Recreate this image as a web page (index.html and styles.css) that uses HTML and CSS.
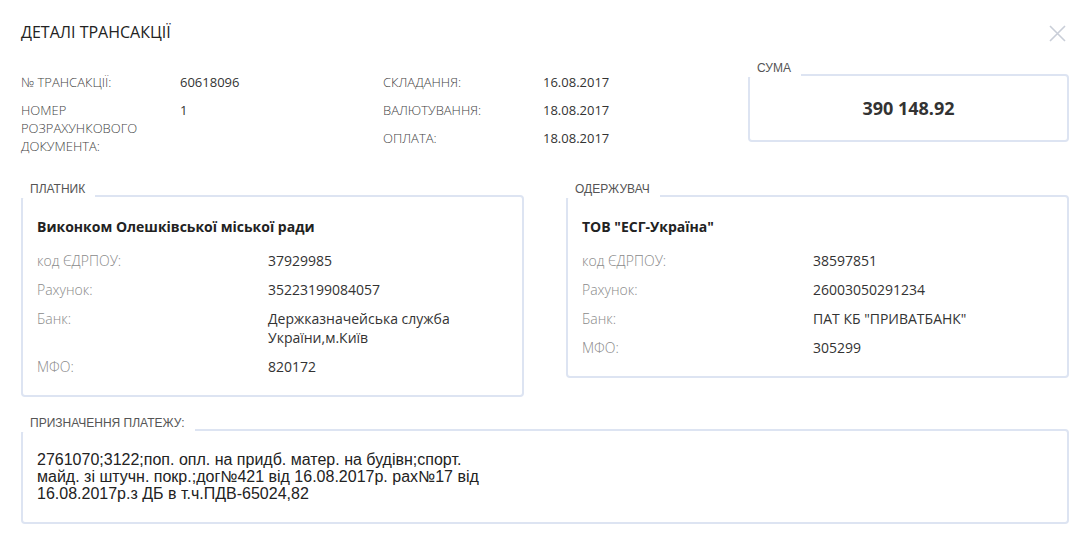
FILE: index.html
```html
<!DOCTYPE html>
<html lang="uk">

<head>
    <meta charset="UTF-8">
    <meta name="viewport" content="width=device-width, initial-scale=1.0">
    <title>Деталі трансакції</title>
    <link rel="stylesheet" href="styles.css">
</head>

<body>
    <div class="modal">
        <div class="modal-head">
            <h1 class="modal-title">ДЕТАЛІ ТРАНСАКЦІЇ</h1>
            <button class="close" type="button" aria-label="Закрити">
                <svg width="17" height="17" viewBox="0 0 17 17">
                    <path d="M1 1 L16 16 M16 1 L1 16" stroke="#c9ced8" stroke-width="1.6" fill="none" />
                </svg>
            </button>
        </div>

        <div class="summary">
            <dl class="info info-main">
                <dt>№ ТРАНСАКЦІЇ:</dt>
                <dd>60618096</dd>
                <dt>НОМЕР РОЗРАХУНКОВОГО ДОКУМЕНТА:</dt>
                <dd>1</dd>
            </dl>
            <dl class="info info-dates">
                <dt>СКЛАДАННЯ:</dt>
                <dd>16.08.2017</dd>
                <dt>ВАЛЮТУВАННЯ:</dt>
                <dd>18.08.2017</dd>
                <dt>ОПЛАТА:</dt>
                <dd>18.08.2017</dd>
            </dl>
            <div class="box sum-box">
                <span class="box-label">СУМА</span>
                <div class="sum">390 148.92</div>
            </div>
        </div>

        <div class="parties">
            <div class="box party">
                <span class="box-label">ПЛАТНИК</span>
                <div class="party-name">Виконком Олешківської міської ради</div>
                <dl class="party-rows">
                    <dt>код ЄДРПОУ:</dt>
                    <dd>37929985</dd>
                    <dt>Рахунок:</dt>
                    <dd>35223199084057</dd>
                    <dt>Банк:</dt>
                    <dd>Держказначейська служба України,м.Київ</dd>
                    <dt>МФО:</dt>
                    <dd>820172</dd>
                </dl>
            </div>
            <div class="box party">
                <span class="box-label">ОДЕРЖУВАЧ</span>
                <div class="party-name">ТОВ "ЕСГ-Україна"</div>
                <dl class="party-rows">
                    <dt>код ЄДРПОУ:</dt>
                    <dd>38597851</dd>
                    <dt>Рахунок:</dt>
                    <dd>26003050291234</dd>
                    <dt>Банк:</dt>
                    <dd>ПАТ КБ "ПРИВАТБАНК"</dd>
                    <dt>МФО:</dt>
                    <dd>305299</dd>
                </dl>
            </div>
        </div>

        <div class="box purpose">
            <span class="box-label">ПРИЗНАЧЕННЯ ПЛАТЕЖУ:</span>
            <p class="purpose-text">2761070;3122;поп. опл. на придб. матер. на будівн;спорт. майд. зі штучн. покр.;дог№421 від 16.08.2017р. рах№17 від 16.08.2017р.з ДБ в т.ч.ПДВ-65024,82</p>
        </div>
    </div>
</body>

</html>
```

FILE: styles.css
```css
* {
    margin: 0;
    padding: 0;
    box-sizing: border-box;
}

body {
    background-color: #fff;
    font-family: "Open Sans", "Liberation Sans", sans-serif;
    color: #333;
}

.modal {
    padding: 20px 15px 0 21px;
}

.modal-head {
    display: flex;
    justify-content: space-between;
    align-items: center;
    height: 24px;
}

.modal-title {
    font-size: 16px;
    font-weight: 400;
    line-height: 24px;
    color: #222;
}

.close {
    border: none;
    background: none;
    width: 17px;
    height: 17px;
    margin-right: 3px;
    margin-top: 2px;
    cursor: pointer;
}

.close svg {
    display: block;
}

/* top block with numbers, dates and sum */
.summary {
    display: flex;
    align-items: flex-start;
    margin-top: 29px;
}

.info {
    display: grid;
    row-gap: 10px;
    font-size: 13px;
    line-height: 18px;
}

.info dt {
    font-weight: 300;
    color: #444;
}

.info dd {
    color: #333;
}

.info-main {
    width: 362px;
    grid-template-columns: 159px 1fr;
}

.info-main dt {
    padding-right: 20px;
}

.info-dates {
    flex: 1;
    grid-template-columns: 160px 1fr;
    align-content: start;
}

/* bordered boxes with a caption on the top edge */
.box {
    position: relative;
    border: 2px solid #dde4f2;
    border-radius: 4px;
    background-color: #fff;
}

.box-label {
    position: absolute;
    left: -2px;
    top: -17px;
    padding: 0 10px 0 9px;
    background-color: #fff;
    font-family: "Liberation Sans", Arial, sans-serif;
    font-size: 12px;
    line-height: 18px;
    color: #555;
}

.sum-box {
    width: 321px;
    height: 68px;
    margin-top: 1px;
    display: flex;
    align-items: center;
    justify-content: center;
}

.sum {
    font-size: 18px;
    font-weight: 700;
    color: #333;
}

.parties {
    display: flex;
    align-items: flex-start;
    gap: 42px;
    margin-top: 40px;
}

.party {
    flex: 1;
    padding: 20px 14px 19px;
}

.party-name {
    font-size: 14px;
    font-weight: 700;
    line-height: 19px;
    color: #222;
    margin-bottom: 15px;
}

.party-rows {
    display: grid;
    grid-template-columns: 231px 1fr;
    row-gap: 10px;
    font-size: 14px;
    line-height: 19px;
}

.party-rows dt {
    font-weight: 300;
    color: #8a8a8a;
}

.party-rows dd {
    color: #333;
    padding-right: 20px;
}

.purpose {
    margin-top: 32px;
    padding: 20px 14px;
}

.purpose-text {
    max-width: 460px;
    font-family: "Liberation Sans", Arial, sans-serif;
    font-size: 16px;
    line-height: 17px;
    color: #222;
}
```
